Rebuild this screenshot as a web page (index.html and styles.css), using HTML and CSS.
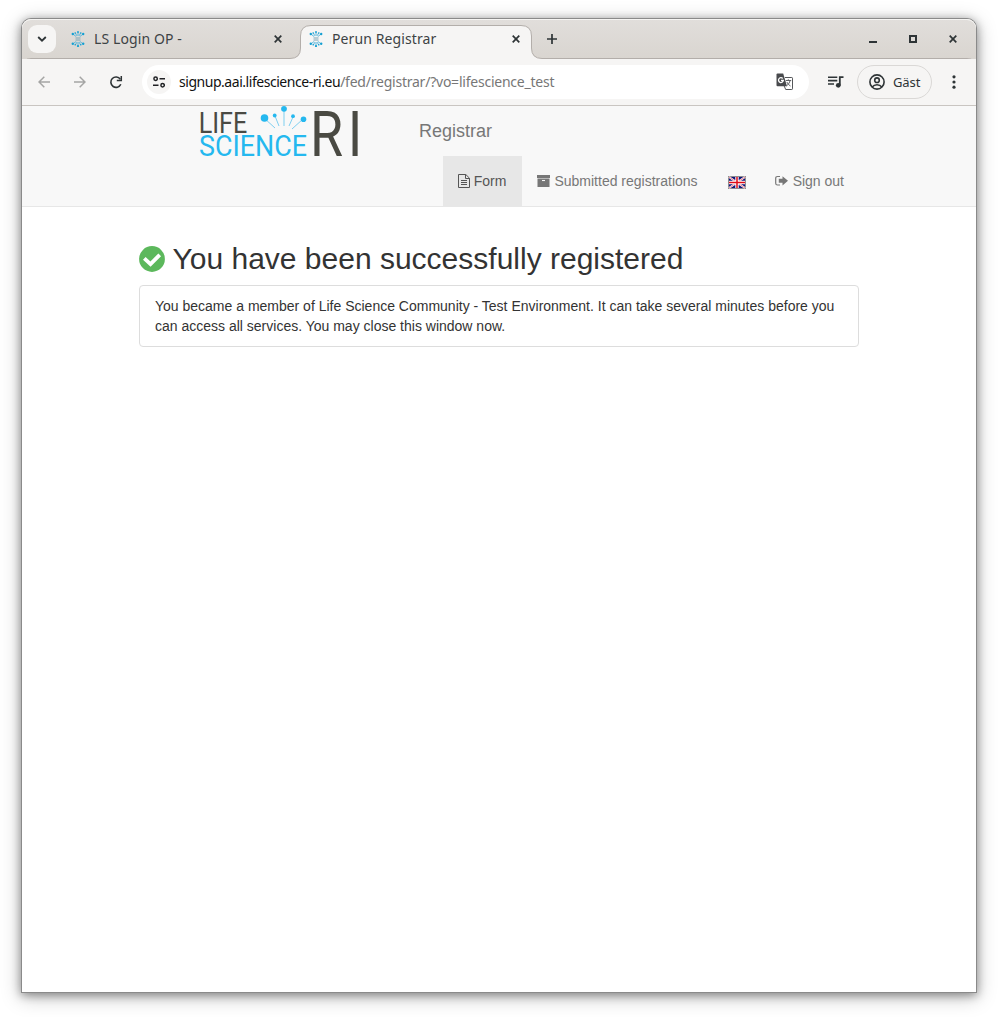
FILE: index.html
```html
<!DOCTYPE html>
<html lang="en">
<head>
<meta charset="utf-8">
<title>Perun Registrar</title>
<link rel="stylesheet" href="styles.css">
</head>
<body>
<svg class="defs" width="0" height="0">
  <symbol id="fav" viewBox="0 0 16 16">
    <g stroke="#4fb2da" stroke-width=".9"><path d="M8 1v4M5.300 1.800l1.500 3M10.700 1.800L9.200 4.800M2.800 3l3.400 2.600M13.200 3L9.800 5.600M8 15v-4M5.300 14.200l1.500-3M10.700 14.200l-1.500-3M2.800 13l3.400-2.600M13.200 13l-3.400-2.600"/></g>
    <path d="M5.500 7h5M5.500 9h5" stroke="#7aa6b8"/>
    <g fill="#16a0d2"><circle cx="8" cy="1" r=".9"/><circle cx="5.200" cy="2" r=".8"/><circle cx="10.800" cy="2" r=".8"/><circle cx="2.800" cy="3" r="1.200"/><circle cx="13.200" cy="3" r="1.200"/><circle cx="8" cy="15" r="1.100"/><circle cx="5.200" cy="13.800" r=".8"/><circle cx="10.800" cy="13.800" r=".8"/><circle cx="2.800" cy="12.700" r="1.200"/><circle cx="13.200" cy="12.700" r="1.200"/></g>
  </symbol>
  <symbol id="x" viewBox="0 0 8 8"><path d="M.7.700l6.600 6.600M7.300.700L.7 7.300" stroke="#2e3436" stroke-width="1.700"/></symbol>
</svg>
<div class="window">
  <header class="tabs">
    <svg class="tab-shape" width="954" height="40" viewBox="0 0 954 40">
      <path d="M0 48.500Q.5 39.500 9 39.500H268Q278.500 39.500 278.500 29V17Q278.500 6.500 289 6.500H499Q509.500 6.500 509.500 17V29Q509.500 39.500 520 39.500H945Q954 39.500 954 48.500" fill="#f6f5f4" stroke="#b3aeaa"/>
    </svg>
    <button class="tab-search"><svg width="10" height="6" viewBox="0 0 10 6"><path d="M1.200 1L5 4.700 8.800 1" fill="none" stroke="#2e3436" stroke-width="1.800"/></svg></button>
    <div class="tab"><svg width="16" height="16"><use href="#fav"/></svg><span class="tab-title">LS Login OP -</span><svg width="8" height="8"><use href="#x"/></svg></div>
    <div class="tab active"><svg width="16" height="16"><use href="#fav"/></svg><span class="tab-title">Perun Registrar</span><svg width="8" height="8"><use href="#x"/></svg></div>
    <svg class="plus" width="10" height="10" viewBox="0 0 10 10"><path d="M0 5h10M5 0v10" stroke="#2e3436" stroke-width="1.700"/></svg>
    <div class="controls">
      <svg width="8" height="8" viewBox="0 0 8 8"><path d="M0 7h8" stroke="#2e3436" stroke-width="2"/></svg>
      <svg width="8" height="8" viewBox="0 0 8 8"><rect x="1" y="1" width="6" height="6" fill="none" stroke="#2e3436" stroke-width="2"/></svg>
      <svg width="8" height="8"><use href="#x"/></svg>
    </div>
  </header>
  <div class="toolbar">
    <svg width="12" height="12" viewBox="0 0 12 12"><path d="M12 6H1M6.300.700L1 6l5.300 5.300" fill="none" stroke="#a5a5a4" stroke-width="1.500"/></svg>
    <svg width="12" height="12" viewBox="0 0 12 12"><path d="M0 6h11M5.700.700L11 6l-5.300 5.300" fill="none" stroke="#a5a5a4" stroke-width="1.500"/></svg>
    <svg width="14" height="14" viewBox="0 0 14 14"><path d="M11.800 9.300A5.200 5.200 0 1 1 11.300 4.200" fill="none" stroke="#2e3436" stroke-width="1.600"/><path d="M12.300 1v4.600H7.800" fill="none" stroke="#2e3436" stroke-width="1.500"/></svg>
    <div class="address">
      <span class="site"><svg width="12" height="12" viewBox="0 0 12 12"><g fill="none" stroke="#202124" stroke-width="1.500"><circle cx="2.600" cy="2.700" r="1.700"/><path d="M6.500 2.700H12M0 9.200h5.500"/><circle cx="9.600" cy="9.200" r="1.700"/></g></svg></span>
      <span class="url"><b>signup.aai.lifescience-ri.eu</b>/fed/registrar/?vo=lifescience_test</span>
      <svg class="translate" width="18" height="18" viewBox="0 0 18 18">
        <path d="M9 4.500h6.800q.7 0 .7.700v10.600q0 .7-.7.700H9.700L8.200 13" fill="#fff" stroke="#55575a"/>
        <path d="M1.500.500h5.700L11 13.300H1.500Q.5 13.300.5 12.300V1.500Q.5.500 1.500.500z" fill="#484a4d"/>
        <path d="M6.700 5.500a2.400 2.400 0 1 0 .6 2H5" fill="none" stroke="#fff" stroke-width="1.300"/>
        <path d="M9.800 7.500h5.400M12.300 6.300v1.200M14.200 7.500q-.9 3.600-3.500 5.200M10.800 9q1.300 2.700 3.700 4" fill="none" stroke="#606265" stroke-width="1"/>
      </svg>
    </div>
    <svg class="media" width="16" height="12" viewBox="0 0 16 12"><path d="M0 1.200h9.300M0 4.600h9.300M0 8h6" stroke="#2e3436" stroke-width="1.600"/><path d="M11.800 9V1.200H15.500" fill="none" stroke="#2e3436" stroke-width="1.800"/><circle cx="10.300" cy="9.300" r="2.400" fill="#2e3436"/></svg>
    <div class="profile"><svg width="16" height="16" viewBox="0 0 16 16"><g fill="none" stroke="#2e3436" stroke-width="1.600"><circle cx="8" cy="8" r="7.100"/><circle cx="8" cy="6.200" r="2.300"/><path d="M3.200 13q1.700-2.200 4.800-2.200t4.800 2.200"/></g></svg><span>Gäst</span></div>
    <svg class="more" width="4" height="14" viewBox="0 0 4 14"><g fill="#2e3436"><circle cx="2" cy="1.800" r="1.600"/><circle cx="2" cy="7" r="1.600"/><circle cx="2" cy="12.200" r="1.600"/></g></svg>
  </div>
  <nav class="navbar">
    <div class="brand-row">
      <svg class="logo" width="160" height="51" viewBox="0 0 160 51">
        <text x="-.3" y="26.500" font-size="29.500" fill="#4a4a43" textLength="48.500" lengthAdjust="spacingAndGlyphs">LIFE</text>
        <text x="0" y="49.500" font-size="29.500" fill="#25b8ef" textLength="108" lengthAdjust="spacingAndGlyphs">SCIENCE</text>
        <text transform="translate(111 50) scale(.86 1)" font-size="62.500" fill="#4a4a43" letter-spacing="5.400">RI</text>
        <g stroke="#7fcff0"><path d="M65 12l11 10M76 10l4 10M85 3v17M94 11l-4 9M104 13l-11 10"/></g>
        <g fill="#25b8ef"><circle cx="65.500" cy="12" r="3.800"/><circle cx="75.700" cy="9.500" r="1.900"/><circle cx="85" cy="2.800" r="2.900"/><circle cx="94" cy="10.200" r="1.900"/><circle cx="104.500" cy="13.200" r="2.800"/></g>
      </svg>
      <span class="brand">Registrar</span>
    </div>
    <div class="menu">
      <a class="item current"><svg width="12" height="14" viewBox="0 0 12 14"><path d="M.5.500h7.300l3.700 3.700v9.300H.5zM7.500.500v4h4M3 6.500h6M3 8.500h6M3 10.500h6" fill="none" stroke="#555"/></svg><span>Form</span></a>
      <a class="item"><svg width="13" height="12" viewBox="0 0 13 12"><path d="M0 0h13v3H0zM.5 3.500h12V12H.5z" fill="#777"/><path d="M5 5.500h3" stroke="#f8f8f8" stroke-width="1.100"/></svg><span>Submitted registrations</span></a>
      <a class="item flag"><svg width="18" height="13" viewBox="0 0 18 13"><path d="M0 0h18v13H0z" fill="#8d8d91"/><path d="M1 1h16v11H1z" fill="#101478"/><path d="M1 1l16 11M17 1L1 12" stroke="#fff" stroke-width="2"/><path d="M1 1l16 11M17 1L1 12" stroke="#e64855" stroke-width=".7"/><path d="M9 1v11M1 6.500h16" stroke="#fff" stroke-width="3.400"/><path d="M9 1v11M1 6.500h16" stroke="#e00c18" stroke-width="1.500"/></svg></a>
      <a class="item out"><svg width="14" height="12" viewBox="0 0 14 12"><path d="M5 1.500H2.500Q.7 1.500.7 3.300v4.900Q.7 10 2.500 10H5" fill="none" stroke="#777" stroke-width="1.200"/><path d="M7.500 1.200L13 5.800 7.500 10.400V7.800H3.800v-4h3.700z" fill="#777"/></svg><span>Sign out</span></a>
    </div>
  </nav>
  <main>
    <h1><svg width="26" height="26" viewBox="0 0 26 26"><circle cx="13" cy="13" r="12.900" fill="#5cb85c"/><path d="M5.300 12.300L11.500 18.100 20.700 8.800" fill="none" stroke="#fff" stroke-width="3.800"/></svg><span>You have been successfully registered</span></h1>
    <p class="panel">You became a member of Life Science Community - Test Environment. It can take several minutes before you can access all services. You may close this window now.</p>
  </main>
</div>
</body>
</html>
```
FILE: styles.css
```css
* { box-sizing: border-box; }
html, body { height: 100%; overflow: hidden; }
body { margin: 0; padding: 19px 22px 25px; background: #fff; font: 14px/20px "Liberation Sans", Arial, sans-serif; color: #333; }
svg { flex: none; display: block; }
.defs { position: absolute; }
.window { height: 973px; border-radius: 9px 9px 0 0; background: #fff; box-shadow: 0 0 0 1px #8a8a8a, 0 2px 10px 1px rgba(0,0,0,.38), 0 4px 20px 1px rgba(0,0,0,.25); }
.tabs { position: relative; height: 40px; display: flex; align-items: center; border-radius: 9px 9px 0 0; background: linear-gradient(#e1dedb, #d9d5d0); box-shadow: inset 0 1px #f5f4f2; padding-left: 6px; font-family: "Noto Sans", sans-serif; }
.tab-shape { position: absolute; left: 0; top: 0; }
.tabs > :not(.tab-shape) { position: relative; }
.tab-search { width: 28px; height: 28px; padding: 0; border: 0; border-radius: 9px; background: #f6f5f4; display: grid; place-items: center; }
.tab { width: 212px; margin-left: 14px; display: flex; align-items: center; gap: 8px; color: #3d4345; }
.tab.active { margin-left: 26px; }
.tab-title { flex: 1; font-size: 14px; line-height: 20px; letter-spacing: .1px; white-space: nowrap; }
.plus { margin-left: 27px; }
.controls { margin-left: auto; margin-right: 19px; display: flex; gap: 32px; }
.toolbar { height: 47px; display: flex; align-items: center; padding: 0 20px 0 16px; background: #f6f5f4; border-bottom: 1px solid #c9c5c1; font-family: "Noto Sans", sans-serif; }
.toolbar > svg:nth-child(2) { margin-left: 24px; }
.toolbar > svg:nth-child(3) { margin-left: 23px; }
.address { width: 667px; height: 34px; margin-left: 19px; padding: 0 15px 0 5px; border-radius: 17px; background: #fff; display: flex; align-items: center; }
.site { width: 24px; height: 24px; border-radius: 50%; background: #f6f5f4; display: grid; place-items: center; }
.url { margin-left: 8px; font-size: 14px; letter-spacing: -.23px; color: #777; white-space: nowrap; }
.url b { font-weight: 400; color: #111; letter-spacing: -.46px; }
.translate { margin-left: auto; }
.toolbar .media { margin-left: 19px; }
.profile { width: 75px; height: 34px; margin-left: 13px; border: 1px solid #dad8d6; border-radius: 17px; display: flex; align-items: center; padding-left: 11px; gap: 8px; font-size: 13px; letter-spacing: -.1px; color: #2e3436; }
.toolbar .more { margin-left: 20px; }
.navbar { height: 101px; background: #f8f8f8; border-bottom: 1px solid #e7e7e7; color: #777; }
.brand-row { height: 50px; display: flex; padding-left: 177px; }
.logo { overflow: visible; font-family: Roboto, sans-serif; font-weight: 400; }
.brand { margin-left: 60px; padding-top: 15px; font-size: 18px; }
.menu { height: 50px; display: flex; justify-content: flex-end; padding-right: 117px; }
.item { height: 50px; padding: 0 15px; display: flex; align-items: center; gap: 4px; white-space: nowrap; }
.out { padding-left: 14px; }
.current { padding-right: 16px; background: #e7e7e7; color: #555; }
.flag { padding-top: 3px; }
main { padding: 32px 117px 0; }
h1 { margin: 0 0 6px; height: 40px; display: flex; align-items: center; gap: 7.500px; font-size: 30px; line-height: 40px; font-weight: 400; white-space: nowrap; }
.panel { margin: 0; height: 62px; padding: 10px 15px; border: 1px solid #ddd; border-radius: 4px; }
```
